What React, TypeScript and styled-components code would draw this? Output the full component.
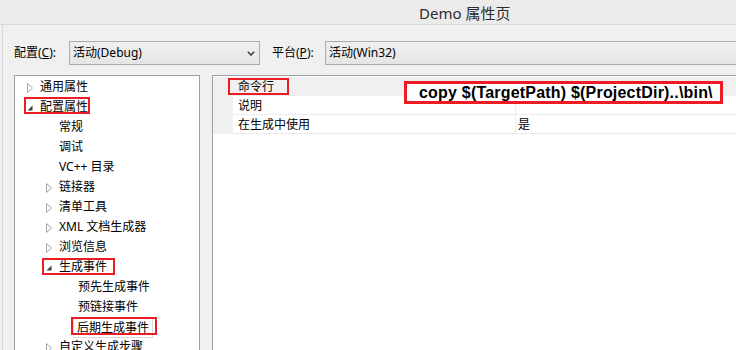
import React from 'react';
import styled, { createGlobalStyle } from 'styled-components';

const GlobalStyle = createGlobalStyle`
  html, body { margin: 0; padding: 0; background: #f0f0f0; }
  body {
    font-family: "Noto Sans", "Noto Sans CJK SC", sans-serif;
    font-size: 12px;
    color: #000;
  }
`;

const RED = '#ed1c24';

const Window = styled.div`
  width: 736px;
  height: 350px;
  overflow: hidden;
  display: flex;
  flex-direction: column;
  background: #f0f0f0;
`;

const TitleBar = styled.div`
  height: 25px;
  flex-shrink: 0;
  box-sizing: border-box;
  border-bottom: 1px solid #d9d9d9;
  background: #ebebeb;
  display: flex;
  align-items: center;
  padding-left: 419px;
  font-size: 15px;
  color: #2b2b2b;
  white-space: nowrap;
`;

const Body = styled.div`
  flex: 1;
  min-height: 0;
  margin-left: 2px;
  border-left: 1px solid #d9d9d9;
  padding: 16px 0 0 11px;
  display: flex;
  flex-direction: column;
  gap: 10px;
  overflow: hidden;
`;

const ConfigRow = styled.div`
  display: flex;
  align-items: center;
  height: 24px;
  flex-shrink: 0;
  white-space: nowrap;
`;

const FieldLabel = styled.span<{ $width: number; $gapLeft?: number }>`
  width: ${(p) => p.$width}px;
  margin-left: ${(p) => p.$gapLeft ?? 0}px;
  flex-shrink: 0;
  line-height: 24px;
`;

const Combo = styled.div<{ $width: number }>`
  width: ${(p) => p.$width}px;
  height: 24px;
  flex-shrink: 0;
  box-sizing: border-box;
  border: 1px solid #acacac;
  background: linear-gradient(#f0f0f0, #e5e5e5);
  display: flex;
  align-items: center;
  padding-left: 3px;
`;

const ComboText = styled.span`
  flex: 1;
  line-height: 22px;
`;

const ComboArrow = styled.svg`
  margin-right: 4px;
  flex-shrink: 0;
`;

const Panels = styled.div`
  flex: 1;
  display: flex;
  gap: 12px;
  min-height: 0;
`;

const TreePanel = styled.div`
  width: 186px;
  height: 320px;
  flex-shrink: 0;
  box-sizing: border-box;
  border: 1px solid #a0a0a0;
  background: #fff;
  padding-top: 1px;
  display: flex;
  flex-direction: column;
`;

const TreeRow = styled.div<{ $level: number }>`
  position: relative;
  height: 20px;
  flex-shrink: 0;
  display: flex;
  align-items: center;
  padding-left: ${(p) => 12 + p.$level * 19}px;
  white-space: nowrap;
`;

const Toggle = styled.span`
  width: 13px;
  height: 20px;
  flex-shrink: 0;
  display: flex;
  align-items: center;
`;

const TreeLabel = styled.span<{ $selected?: boolean }>`
  line-height: 20px;
  ${(p) =>
    p.$selected
      ? `box-shadow: 0 0 0 1px #dadada; line-height: 18px; margin-top: 1px; padding: 0 3px; margin-left: -4px;`
      : ''}
`;

const Mark = styled.span<{ $left: number; $top: number; $w: number; $h: number; $thick?: number }>`
  position: absolute;
  left: ${(p) => p.$left}px;
  top: ${(p) => p.$top}px;
  width: ${(p) => p.$w}px;
  height: ${(p) => p.$h}px;
  box-sizing: border-box;
  border: ${(p) => p.$thick ?? 2}px solid ${RED};
  pointer-events: none;
`;

const GridPanel = styled.div`
  position: relative;
  flex: 1;
  height: 320px;
  box-sizing: border-box;
  border-left: 1px solid #a0a0a0;
  border-top: 1px solid #a0a0a0;
  background: #fff;
  padding-top: 1px;
  display: flex;
  flex-direction: column;
`;

const GridRow = styled.div<{ $selected?: boolean }>`
  display: flex;
  height: 19px;
  flex-shrink: 0;
  background: ${(p) => (p.$selected ? '#f0f0f0' : '#fff')};
  white-space: nowrap;
`;

const Gutter = styled.div`
  width: 20px;
  flex-shrink: 0;
  background: #f0f0f0;
`;

const NameCell = styled.div`
  width: 282px;
  flex-shrink: 0;
  box-sizing: border-box;
  border-bottom: 1px solid #ececec;
  padding: 1px 0 0 5px;
  line-height: 17px;
`;

const ValueCell = styled.div`
  flex: 1;
  box-sizing: border-box;
  border-left: 1px solid #ececec;
  border-bottom: 1px solid #ececec;
  padding: 1px 0 0 2px;
  line-height: 17px;
`;

const CommandBox = styled.div`
  position: absolute;
  left: 191px;
  top: 5px;
  width: 319px;
  height: 23px;
  box-sizing: border-box;
  border: 3px solid ${RED};
  background: #fff;
  padding-left: 12px;
  font-family: "Liberation Sans", Arial, sans-serif;
  font-weight: bold;
  font-size: 16px;
  letter-spacing: 0.2px;
  line-height: 17px;
  color: #000;
  white-space: nowrap;
`;

const Collapsed = () => (
  <svg width="6" height="10" viewBox="0 0 6 10" style={{ marginTop: 1 }}>
    <path d="M0.5 0.5 L5.5 5 L0.5 9.5 Z" fill="none" stroke="#a6a6a6" strokeWidth="1" />
  </svg>
);

const Expanded = () => (
  <svg width="6" height="6" viewBox="0 0 6 6" style={{ marginTop: 2 }}>
    <path d="M5.5 0.5 L5.5 5.5 L0.5 5.5 Z" fill="#404040" />
  </svg>
);

type TreeItem = {
  label: string;
  level: number;
  toggle?: 'collapsed' | 'expanded';
  selected?: boolean;
  mark?: { left: number; top: number; w: number; h: number };
};

const treeItems: TreeItem[] = [
  { label: '通用属性', level: 0, toggle: 'collapsed' },
  { label: '配置属性', level: 0, toggle: 'expanded', mark: { left: 9, top: 0, w: 66, h: 17 } },
  { label: '常规', level: 1 },
  { label: '调试', level: 1 },
  { label: 'VC++ 目录', level: 1 },
  { label: '链接器', level: 1, toggle: 'collapsed' },
  { label: '清单工具', level: 1, toggle: 'collapsed' },
  { label: 'XML 文档生成器', level: 1, toggle: 'collapsed' },
  { label: '浏览信息', level: 1, toggle: 'collapsed' },
  { label: '生成事件', level: 1, toggle: 'expanded', mark: { left: 27, top: 1, w: 73, h: 17 } },
  { label: '预先生成事件', level: 2 },
  { label: '预链接事件', level: 2 },
  { label: '后期生成事件', level: 2, selected: true, mark: { left: 56, top: 0, w: 86, h: 18 } },
  { label: '自定义生成步骤', level: 1, toggle: 'collapsed' },
];

const gridRows = [
  { name: '命令行', value: '', selected: true },
  { name: '说明', value: '' },
  { name: '在生成中使用', value: '是' },
];

const ChevronDown = () => (
  <ComboArrow width="8" height="5" viewBox="0 0 8 5">
    <polyline points="0.8,0.8 4,4 7.2,0.8" fill="none" stroke="#404040" strokeWidth="1.6" />
  </ComboArrow>
);

export default function App() {
  return (
    <Window>
      <GlobalStyle />
      <TitleBar>Demo 属性页</TitleBar>
      <Body>
        <ConfigRow>
          <FieldLabel $width={55}>
            配置(<u>C</u>):
          </FieldLabel>
          <Combo $width={191}>
            <ComboText>活动(Debug)</ComboText>
            <ChevronDown />
          </Combo>
          <FieldLabel $width={53} $gapLeft={12}>
            平台(<u>P</u>):
          </FieldLabel>
          <Combo $width={440}>
            <ComboText>活动(Win32)</ComboText>
          </Combo>
        </ConfigRow>
        <Panels>
          <TreePanel>
            {treeItems.map((it) => (
              <TreeRow key={it.label} $level={it.level}>
                <Toggle>
                  {it.toggle === 'collapsed' && <Collapsed />}
                  {it.toggle === 'expanded' && <Expanded />}
                </Toggle>
                <TreeLabel $selected={it.selected}>{it.label}</TreeLabel>
                {it.mark && <Mark $left={it.mark.left} $top={it.mark.top} $w={it.mark.w} $h={it.mark.h} />}
              </TreeRow>
            ))}
          </TreePanel>
          <GridPanel>
            {gridRows.map((r) => (
              <GridRow key={r.name} $selected={r.selected}>
                <Gutter />
                <NameCell>{r.name}</NameCell>
                <ValueCell>{r.value}</ValueCell>
              </GridRow>
            ))}
            <Mark $left={15} $top={2} $w={61} $h={17} />
            <CommandBox>copy $(TargetPath) $(ProjectDir)..\bin\</CommandBox>
          </GridPanel>
        </Panels>
      </Body>
    </Window>
  );
}
